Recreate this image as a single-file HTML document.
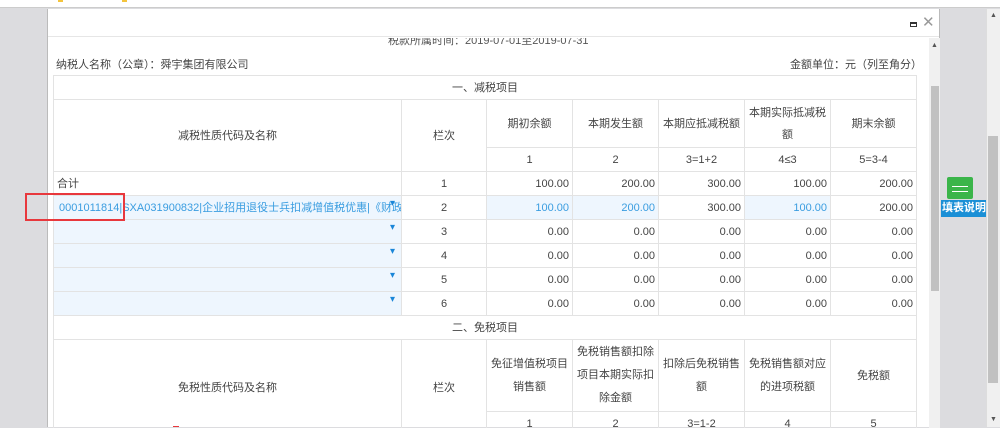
<!DOCTYPE html>
<html><head><meta charset="utf-8"><style>
*{margin:0;padding:0;box-sizing:border-box}
body{width:1000px;height:427px;overflow:hidden;background:#dcdcdf;font-family:"Liberation Sans","Noto Sans CJK SC",sans-serif;position:relative;font-size:11px;color:#333}
.top{position:absolute;left:0;top:0;width:1000px;height:8px;background:#fff;border-bottom:1px solid #ccc}
.dlg{position:absolute;left:47px;top:9px;width:893px;height:418px;background:#fff;border-left:1px solid #bbb;border-right:1px solid #bbb}
.hd{position:absolute;left:0;top:0;width:100%;height:28px;border-bottom:1px solid #e6e6e6}
.inner{position:absolute;left:0;top:29px;width:880px;height:390px;overflow:hidden}
.isb{position:absolute;left:881px;top:29px;width:11px;height:390px;background:#f0f0f0}
.isb .th{position:absolute;left:2px;top:48px;width:8px;height:205px;background:#c1c1c1}
table{position:absolute;left:5px;top:37px;border-collapse:collapse;table-layout:fixed;width:863px}
td{border:1px solid #e3e3e3;height:24px;text-align:center;font-size:11px;padding:0 3px;color:#444;line-height:22px}
td.r{text-align:right}
td.l{text-align:left}
.b{color:#3a9de0}
.bg{background:#eef6fe}
.dd{position:relative}
.dd:after{content:"▾";position:absolute;right:6px;top:-3px;color:#1a86d8;font-size:10px}
</style></head><body>
<div class="top"></div>
<div style="position:absolute;left:58px;top:0;width:5px;height:2px;background:#f4c43d"></div>
<div style="position:absolute;left:122px;top:0;width:5px;height:2px;background:#f4c43d"></div>
<div class="dlg">
 <div class="hd">
  <div style="position:absolute;left:862px;top:13px;width:7px;height:5px;border:1px solid #333;border-top-width:2px"></div>
  <div style="position:absolute;left:874px;top:4px;font-size:15px;color:#999">✕</div>
 </div>
 <div class="inner">
  <div style="position:absolute;left:340px;top:-6px;font-size:11px;color:#555">税款所属时间：2019-07-01至2019-07-31</div>
  <div style="position:absolute;left:8px;top:18px;color:#444">纳税人名称（公章）：舜宇集团有限公司</div>
  <div style="position:absolute;left:742px;top:18px;color:#444">金额单位：元（列至角分）</div>
  <table>
   <colgroup><col style="width:348px"><col style="width:85px"><col style="width:86px"><col style="width:86px"><col style="width:86px"><col style="width:86px"><col style="width:86px"></colgroup>
   <tr><td colspan="7">一、减税项目</td></tr>
   <tr><td rowspan="2" style="height:72px">减税性质代码及名称</td><td rowspan="2">栏次</td><td style="height:48px">期初余额</td><td>本期发生额</td><td>本期应抵减税额</td><td style="line-height:22px">本期实际抵减税额</td><td>期末余额</td></tr>
   <tr><td>1</td><td>2</td><td>3=1+2</td><td>4≤3</td><td>5=3-4</td></tr>
   <tr><td class="l">合计</td><td>1</td><td class="r">100.00</td><td class="r">200.00</td><td class="r">300.00</td><td class="r">100.00</td><td class="r">200.00</td></tr>
   <tr><td class="l bg dd b" style="white-space:nowrap;overflow:hidden;padding-left:5px">0001011814|SXA031900832|企业招用退役士兵扣减增值税优惠|《财政</td><td>2</td><td class="r bg b">100.00</td><td class="r bg b">200.00</td><td class="r">300.00</td><td class="r bg b">100.00</td><td class="r">200.00</td></tr>
   <tr><td class="bg dd"></td><td>3</td><td class="r">0.00</td><td class="r">0.00</td><td class="r">0.00</td><td class="r">0.00</td><td class="r">0.00</td></tr>
   <tr><td class="bg dd"></td><td>4</td><td class="r">0.00</td><td class="r">0.00</td><td class="r">0.00</td><td class="r">0.00</td><td class="r">0.00</td></tr>
   <tr><td class="bg dd"></td><td>5</td><td class="r">0.00</td><td class="r">0.00</td><td class="r">0.00</td><td class="r">0.00</td><td class="r">0.00</td></tr>
   <tr><td class="bg dd"></td><td>6</td><td class="r">0.00</td><td class="r">0.00</td><td class="r">0.00</td><td class="r">0.00</td><td class="r">0.00</td></tr>
   <tr><td colspan="7">二、免税项目</td></tr>
   <tr><td rowspan="2" style="height:96px">免税性质代码及名称</td><td rowspan="2">栏次</td><td style="height:72px;line-height:23px">免征增值税项目销售额</td><td style="line-height:23px">免税销售额扣除项目本期实际扣除金额</td><td style="line-height:23px">扣除后免税销售额</td><td style="line-height:23px">免税销售额对应的进项税额</td><td>免税额</td></tr>
   <tr><td>1</td><td>2</td><td>3=1-2</td><td>4</td><td>5</td></tr>
  </table>
 </div>
 <div class="isb"><div class="th"></div><div style="position:absolute;left:2px;top:4px;font-size:7px;color:#555">▲</div></div>
</div>
<div style="position:absolute;left:25px;top:193px;width:100px;height:28px;border:2px solid #e8383d"></div>
<div style="position:absolute;left:173px;top:426px;width:6px;height:1px;background:#e8383d"></div>
<div style="position:absolute;left:947px;top:177px;width:26px;height:22px;background:#3bb54a;border-radius:2px"></div>
<div style="position:absolute;left:952px;top:186px;width:16px;height:1px;background:#fff"></div>
<div style="position:absolute;left:952px;top:191px;width:16px;height:1px;background:#fff"></div>
<div style="position:absolute;left:941px;top:200px;width:46px;height:17px;background:#1a8fd6;color:#fff;font-size:11px;font-weight:bold;line-height:17px;text-align:center">填表说明</div>
<div style="position:absolute;left:986px;top:9px;width:14px;height:418px;background:#f0f0f0;border-left:1px solid #ddd"></div>
<div style="position:absolute;left:988px;top:136px;width:10px;height:247px;background:#c1c1c1"></div>
<div style="position:absolute;left:990px;top:12px;font-size:7px;color:#555">▲</div>
<div style="position:absolute;left:990px;top:416px;font-size:7px;color:#555">▼</div>
</body></html>
